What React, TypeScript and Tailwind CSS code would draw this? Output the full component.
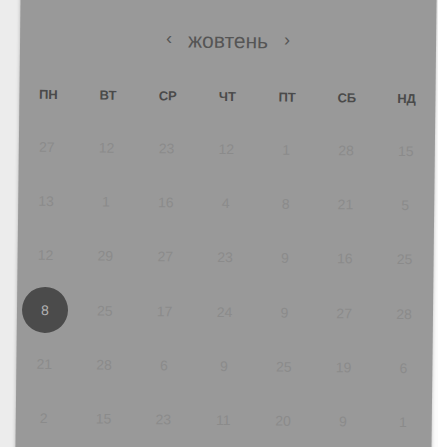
const weeks: number[][] = [
  [27, 12, 23, 12, 1, 28, 15],
  [13, 1, 16, 4, 8, 21, 5],
  [12, 29, 27, 23, 9, 16, 25],
  [8, 25, 17, 24, 9, 27, 28],
  [21, 28, 6, 9, 25, 19, 6],
  [2, 15, 23, 11, 20, 9, 1],
];

const dayNames = ['пн', 'вт', 'ср', 'чт', 'пт', 'сб', 'нд'];

export default function App() {
  return (
    <div className="h-[447px] w-[438px] overflow-hidden bg-[linear-gradient(to_right,#ececec_50%,#fbfbfb_50%)] font-['Liberation_Sans',Arial,sans-serif]">
      <div className="-mt-[16px] ml-[18px] h-[480px] w-[416px] rotate-[0.65deg] bg-[#999999] pt-[16px] shadow-[0_0_4px_rgba(0,0,0,0.25)]">
        {/* Month header */}
        <div className="flex h-[81px] items-center justify-center gap-[16px] text-[#555555]">
          <span className="-mt-[3px] text-[18px] leading-none">‹</span>
          <span className="text-[21px] leading-none">жовтень</span>
          <span className="-mt-[3px] text-[18px] leading-none">›</span>
        </div>

        {/* Weekday labels */}
        <div className="-ml-[1px] mt-[3px] grid h-[25px] w-[418px] grid-cols-7 items-center">
          {dayNames.map((d) => (
            <div key={d} className="text-center text-[13px] font-bold uppercase text-[#4a4a4a]">
              {d}
            </div>
          ))}
        </div>

        {/* Day grid */}
        <div className="-ml-[2px] mt-[13px] grid w-[419px] grid-cols-7">
          {weeks.map((week, wi) =>
            week.map((n, di) => {
              const active = wi === 3 && di === 0;
              return (
                <div key={`${wi}-${di}`} className="flex h-[54.3px] items-center justify-center">
                  {active ? (
                    <div className="flex h-[46px] w-[46px] items-center justify-center rounded-full bg-[#4b4b4b] text-[14px] text-[#b0b0b0]">
                      {n}
                    </div>
                  ) : (
                    <span className="text-[14px] text-[#8b8b8b]">{n}</span>
                  )}
                </div>
              );
            })
          )}
        </div>
      </div>
    </div>
  );
}
